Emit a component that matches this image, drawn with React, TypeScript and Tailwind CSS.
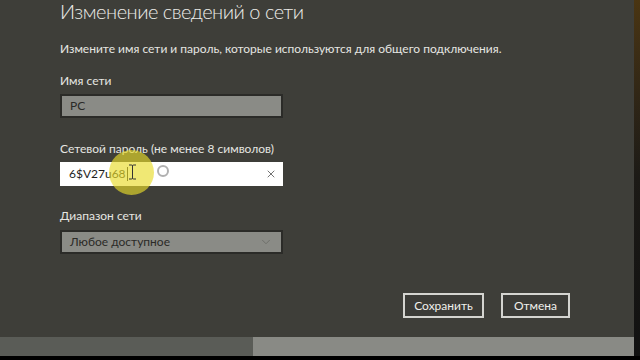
import { ChevronDown, X } from 'lucide-react';

const font = { fontFamily: 'Lato, "Noto Sans", sans-serif' };

function Label({ children }: { children: React.ReactNode }) {
  return <div className="text-[12px] leading-[18px] text-[#e6e6e2]">{children}</div>;
}

export default function App() {
  return (
    <div className="w-[640px] h-[360px] bg-black flex flex-col overflow-hidden" style={font}>
      <div className="flex flex-1 min-h-0">
        <div className="w-[634px] bg-[#3e3e39] flex flex-col">
          <div className="flex-1 pl-[60px] relative">
            <h1 className="text-[20px] leading-[22px] font-light tracking-[-0.5px] text-[#ecece8]">
              Изменение сведений о сети
            </h1>
            <p className="mt-[18px] text-[12px] leading-[18px] text-[#e6e6e2]">
              Измените имя сети и пароль, которые используются для общего подключения.
            </p>

            <div className="mt-[14px]">
              <Label>Имя сети</Label>
              <div className="mt-[4px] w-[223px] h-[24px] bg-[#8a8b86] border-2 border-[#2b2b28] flex items-center pl-[8px] text-[12px] text-[#2a2a27]">
                PC
              </div>
            </div>

            <div className="mt-[22px]">
              <Label>Сетевой пароль (не менее 8 символов)</Label>
              <div className="mt-[4px] w-[223px] h-[24px] bg-white flex items-center pl-[9px] pr-[6px] text-[12px] text-[#1e1e1e]">
                <span>6$V27u68</span>
                <span className="w-px h-[14px] bg-[#222] ml-[1px]" />
                <span className="flex-1" />
                <X className="w-[12px] h-[12px] text-[#444]" strokeWidth={1.5} />
              </div>
            </div>

            <div className="mt-[21px]">
              <Label>Диапазон сети</Label>
              <div className="mt-[5px] w-[223px] h-[24px] bg-[#8a8b86] border-2 border-[#2b2b28] flex items-center pl-[8px] pr-[8px] text-[12px] text-[#2a2a27]">
                <span className="flex-1">Любое доступное</span>
                <ChevronDown className="w-[14px] h-[14px] text-[#6a6b66]" strokeWidth={1.5} />
              </div>
            </div>

            <div className="mt-[39px] pr-[64px] flex justify-end gap-[17px]">
              <button className="w-[81px] h-[25px] border-2 border-[#d4d4d0] bg-[#3b3b37] text-[12px] leading-[21px] text-[#f0f0ec]">
                Сохранить
              </button>
              <button className="w-[69px] h-[25px] border-2 border-[#d4d4d0] bg-[#3b3b37] text-[12px] leading-[21px] text-[#f0f0ec]">
                Отмена
              </button>
            </div>

            <div className="absolute left-[109px] top-[150px] w-[45px] h-[45px] rounded-full bg-[#e8dc2a]/65 pointer-events-none" />
            <div className="absolute left-[157px] top-[165px] w-[12px] h-[12px] rounded-full border-2 border-[#b0b0b0] pointer-events-none" />
            <svg className="absolute left-[128px] top-[164px] pointer-events-none" width="9" height="16" viewBox="0 0 9 16">
              <path d="M1 1h2.5q1 0 1 1v12q0 1-1 1H1M8 1H5.5q-1 0-1 1v12q0 1 1 1H8" fill="none" stroke="#333" strokeWidth="1" />
            </svg>
          </div>
          <div className="h-[19px] flex">
            <div className="w-[253px] bg-[#5a5c57]" />
            <div className="flex-1 bg-[#898a85]" />
          </div>
        </div>
        <div className="w-[6px] bg-gradient-to-b from-[#4a3512] via-[#1c1a16] to-[#111]" />
      </div>
      <div className="h-[4px] bg-black" />
    </div>
  );
}
